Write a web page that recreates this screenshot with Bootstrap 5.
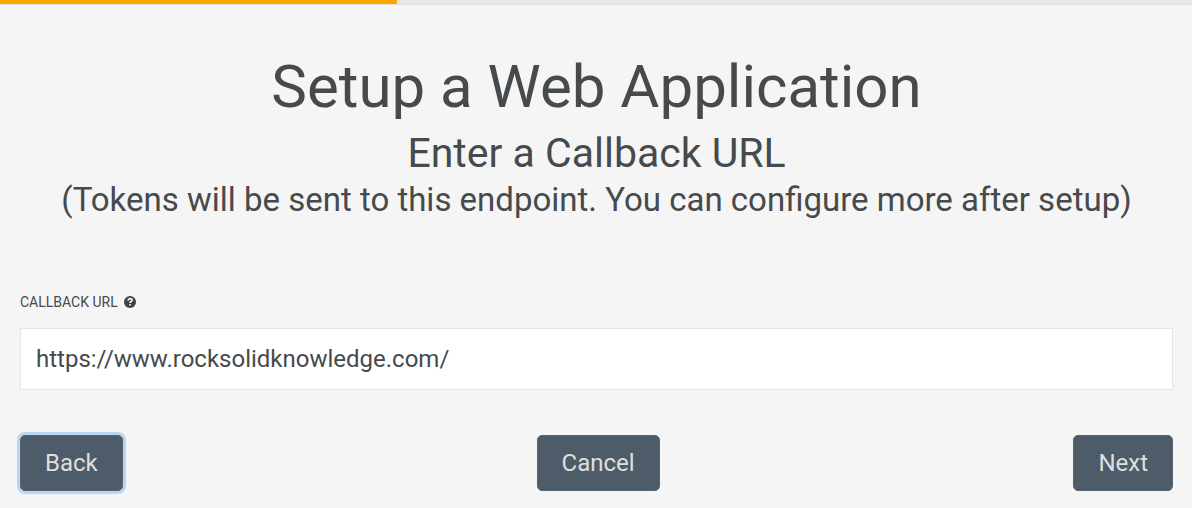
<!DOCTYPE html>
<html lang="en">
<head>
<meta charset="utf-8">
<meta name="viewport" content="width=device-width, initial-scale=1">
<title>Setup a Web Application</title>
<link href="https://cdn.jsdelivr.net/npm/bootstrap@5.3.0/dist/css/bootstrap.min.css" rel="stylesheet">
<style>
body{background:#f5f5f5;color:#464a4c;font-family:Roboto,sans-serif}
.progress{--bs-progress-height:5px;--bs-progress-bg:#e7e7e7;--bs-progress-border-radius:0;--bs-progress-bar-bg:#ffa500;border-bottom:1px solid #e1e1e1}
h1,h2,p{font-weight:400;margin:0}
h1{font-size:60px;line-height:66px}
h2{font-size:41px;line-height:46px}
.hint{font-size:33px;line-height:48px}
.wizard{padding:49px 19px 16px 20px}
.wizard header{display:grid}
.wizard h1{margin-bottom:10px}
.wizard form{margin-top:68px}
.form-label{font-size:14px;line-height:20px;margin:0 0 16px;gap:6px}
.form-control{font-size:24px;line-height:36px;padding:12px 15px;border-radius:0;border-color:#e5e5e5;color:#464a4c}
.steps{margin-top:45px}
.btn-step{--bs-btn-color:#dfdfde;--bs-btn-bg:#4d5c68;--bs-btn-border-color:#536572;--bs-btn-hover-color:#fff;--bs-btn-hover-bg:#3f4b55;font-size:24px;line-height:36px;padding:9px 24px;border-radius:5px}
.btn-step.current{box-shadow:0 0 0 3px #b9d5f0}
</style>
<script src="https://cdn.jsdelivr.net/npm/bootstrap@5.3.0/dist/js/bootstrap.bundle.min.js" defer></script>
</head>
<body>
<div class="progress" role="progressbar" aria-label="Setup progress" aria-valuenow="33" aria-valuemin="0" aria-valuemax="100"><div class="progress-bar" style="width:33.3%"></div></div>
<main class="wizard">
<header class="text-center">
<h1>Setup a Web Application</h1>
<h2>Enter a Callback URL</h2>
<p class="hint">(Tokens will be sent to this endpoint. You can configure more after setup)</p>
</header>
<form>
<div class="d-flex flex-column">
<label class="form-label text-uppercase d-flex align-items-center" for="url">Callback URL
<svg width="12" height="12" viewBox="0 0 12 12" aria-hidden="true"><circle cx="6" cy="6" r="6" fill="#3e4244"/><path d="M4 4.6C4.2 3.2 5 2.7 6.1 2.7c1.2 0 1.9.6 1.9 1.5C8 5.5 6.1 5.5 6.1 7" fill="none" stroke="#f5f5f5" stroke-width="1.7"/><path d="M5.2 8h1.7v1.6H5.2z" fill="#f5f5f5"/></svg></label>
<input class="form-control" id="url" type="text" value="https://www.rocksolidknowledge.com/">
</div>
<div class="d-flex justify-content-between steps">
<button type="button" class="btn btn-step current">Back</button>
<button type="button" class="btn btn-step">Cancel</button>
<button type="button" class="btn btn-step">Next</button>
</div>
</form>
</main>
</body>
</html>
